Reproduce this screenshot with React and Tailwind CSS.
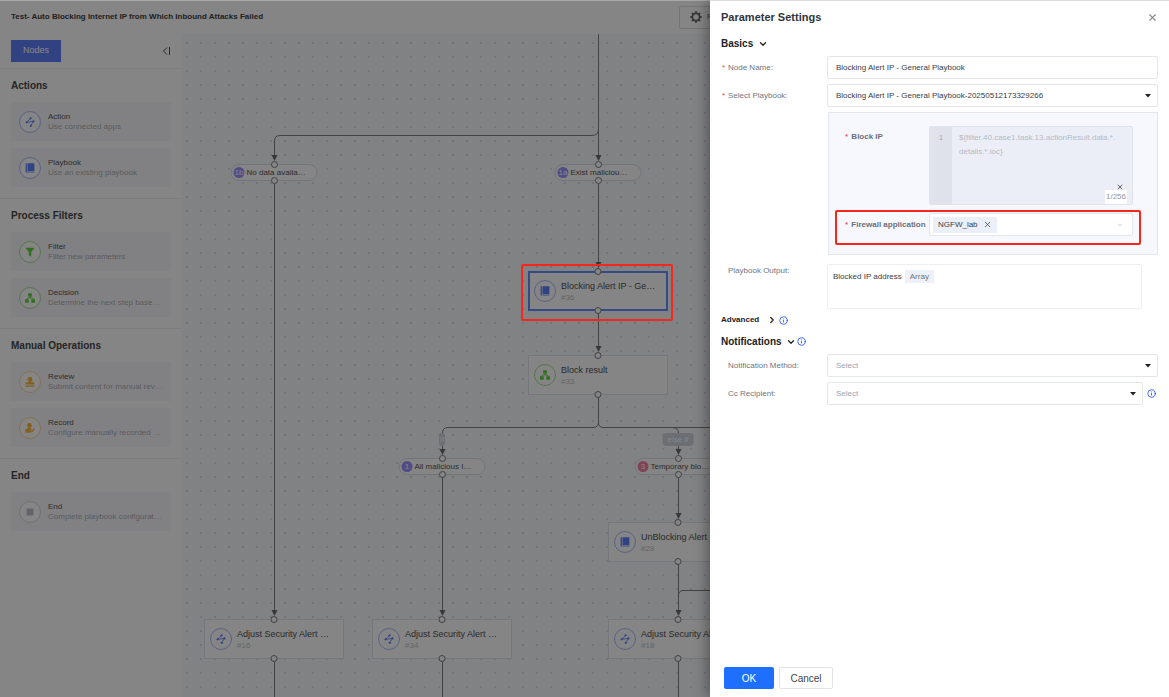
import { useState } from "react";
import { ChevronDown, ChevronRight, Info, X } from "lucide-react";
import clsx from "clsx";

const TONES = {
  blue: "border-[#a9bcff] text-[#5a82ff]",
  green: "border-[#a2e392] text-[#62d443]",
  orange: "border-[#ffd899] text-[#fcb840]",
  gray: "border-[#d5d8e0] text-[#bcc0ca]",
};

const ICONS = {
  action: (
    <>
      <path d="M9 2 3 8.500 13.500 7 9.200 14" fill="none" stroke="currentColor" strokeWidth="1.300" />
      <circle cx="9" cy="2" r="1.800" />
      <circle cx="2.600" cy="8.500" r="1.800" />
      <circle cx="13.500" cy="7" r="1.800" />
      <circle cx="9.200" cy="14" r="1.800" />
    </>
  ),
  playbook: (
    <>
      <path d="M1 .5h2v13H1zM4 .5h11v12.500H4z" />
      <path d="M1.500 12v2.700H15" fill="none" stroke="currentColor" strokeWidth="1" />
    </>
  ),
  filter: <path d="M.5 1h15L10 8v7.500l-4-2.500V8z" />,
  decision: (
    <>
      <path d="M5 .5h6v5.500H5zM0 10h6v5.500H0zM10 10h6v5.500h-6z" />
      <path d="M8 6v2M3 10.500V9l2-1h6l2 1v1.500" fill="none" stroke="currentColor" strokeWidth="1.500" />
    </>
  ),
  review: (
    <>
      <circle cx="8" cy="4" r="3.900" />
      <path d="M6.300 6h3.400v2.500H14a1 1 0 0 1 1 1V12H1V9.500a1 1 0 0 1 1-1h4.300zM.8 13.500h14.400v2H.8z" />
    </>
  ),
  record: (
    <>
      <circle cx="7" cy="4" r="3.900" />
      <path d="M5.200 6.500h3.600v2l2 .8L8.200 15.500H.5v-4a2 2 0 0 1 1.700-1.900l3-1.100z" />
      <path d="m9.500 13 4.300-4.600 1.900 1.800-4.400 4.500-2.200.7z" />
    </>
  ),
  end: <path d="M2.500 2.500h11v11h-11z" />,
};

const SECTIONS = [
  {
    title: "Actions",
    items: [
      { icon: "action", tone: "blue", name: "Action", hint: "Use connected apps" },
      { icon: "playbook", tone: "blue", name: "Playbook", hint: "Use an existing playbook" },
    ],
  },
  {
    title: "Process Filters",
    items: [
      { icon: "filter", tone: "green", name: "Filter", hint: "Filter new parameters" },
      { icon: "decision", tone: "green", name: "Decision", hint: "Determine the next step base…" },
    ],
  },
  {
    title: "Manual Operations",
    items: [
      { icon: "review", tone: "orange", name: "Review", hint: "Submit content for manual rev…" },
      { icon: "record", tone: "orange", name: "Record", hint: "Configure manually recorded …" },
    ],
  },
  {
    title: "End",
    items: [{ icon: "end", tone: "gray", name: "End", hint: "Complete playbook configurat…" }],
  },
];

// Canvas coordinates: x is the centre of the node, y its top edge
const CARDS = [
  { x: 416, y: 237, icon: "playbook", tone: "blue", label: "Blocking Alert IP - Ge…", id: "#36", active: true },
  { x: 416, y: 321, icon: "decision", tone: "green", label: "Block result", id: "#33" },
  { x: 496, y: 488, icon: "playbook", tone: "blue", label: "UnBlocking Alert", id: "#28" },
  { x: 92, y: 585, icon: "action", tone: "blue", label: "Adjust Security Alert …", id: "#16" },
  { x: 260, y: 585, icon: "action", tone: "blue", label: "Adjust Security Alert …", id: "#34" },
  { x: 496, y: 585, icon: "action", tone: "blue", label: "Adjust Security Alert …", id: "#18" },
];

const PILLS = [
  { x: 92, y: 130, badge: "1b", color: "bg-[#9c92ff]", label: "No data availa…" },
  { x: 416, y: 130, badge: "1a", color: "bg-[#9c92ff]", label: "Exist maliciou…" },
  { x: 260, y: 424, badge: "1", color: "bg-[#9c92ff]", label: "All malicious I…" },
  { x: 496, y: 424, badge: "3", color: "bg-[#f682a8]", label: "Temporary blo…" },
];

const EDGES = [
  "M416.5 0V126",
  "M416.5 95Q416.5 101.5 410 101.5H98Q92.5 101.5 92.5 107V126",
  "M92.5 150V581",
  "M416.5 150V233",
  "M416.5 279V317",
  "M416.5 363V388Q416.5 393.5 411 393.5H266Q260.5 393.5 260.5 399V420",
  "M416.5 388Q416.5 393.5 421 393.5H490Q496.5 393.5 496.5 399V420",
  "M490 393.5H600",
  "M260.5 443V581",
  "M496.5 443V484",
  "M496.5 529V581",
  "M600 556.5H501Q496.5 556.5 496.5 562V581",
  "M92.5 627V700",
  "M260.5 627V700",
  "M496.5 627V700",
];

const ARROWS = [
  [92.5, 127], [416.5, 127], [416.5, 234], [416.5, 318], [260.5, 421],
  [496.5, 421], [496.5, 485], [92.5, 582], [260.5, 582], [496.5, 582],
];

const NodeIcon = ({ icon, tone }) => (
  <span
    className={clsx(
      "flex size-[22px] shrink-0 items-center justify-center rounded-full border bg-white",
      TONES[tone]
    )}
  >
    <svg viewBox="0 0 16 16" className="size-[10px]" fill="currentColor">
      {ICONS[icon]}
    </svg>
  </span>
);

const Port = ({ className }) => (
  <span
    className={clsx(
      "absolute left-1/2 size-[7px] -translate-x-1/2 rounded-full border border-[#7d7d7d] bg-white",
      className
    )}
  />
);

const Sidebar = () => (
  <aside className="w-[182px] shrink-0 overflow-hidden bg-white">
    <div className="flex h-[35px] items-center justify-between border-b border-[#edeef2] px-[11px]">
      <button className="h-[22px] bg-[#5f7ffa] px-3 text-[9px] text-white">Nodes</button>
      <button aria-label="Collapse nodes" className="text-[#555]">
        <svg viewBox="0 0 9 10" className="h-[10px] w-[9px]" fill="none" stroke="currentColor">
          <path d="M5 1.500 1.500 5 5 8.500M7.500 1v8" />
        </svg>
      </button>
    </div>
    {SECTIONS.map((section) => (
      <section
        key={section.title}
        className="border-b border-[#edeef2] px-[11px] pt-[11px] pb-[11px] last:border-b-0"
      >
        <h2 className="mb-[10px] text-[10px] leading-3 font-bold text-[#484848]">{section.title}</h2>
        <div className="flex flex-col gap-[7px]">
          {section.items.map((item) => (
            <div key={item.name} className="flex h-[39px] items-center gap-[7px] bg-[#f8f8fc] pl-2">
              <NodeIcon icon={item.icon} tone={item.tone} />
              <div className="min-w-0 text-[8px] leading-[10px] whitespace-nowrap">
                <p className="text-[#555]">{item.name}</p>
                <p className="text-[#aeb0b7]">{item.hint}</p>
              </div>
            </div>
          ))}
        </div>
      </section>
    ))}
  </aside>
);

const Canvas = () => (
  <main className="relative flex-1 overflow-hidden bg-[#f8f9fe] bg-[radial-gradient(circle,#dcdee5_1px,transparent_1px)] bg-size-[14px_14px] bg-position-[-2px_2px]">
    <svg className="absolute inset-0 h-full w-full" fill="none" stroke="#808080">
      {EDGES.map((d) => (
        <path key={d} d={d} />
      ))}
      {ARROWS.map(([x, y]) => (
        <path key={`${x}-${y}`} d={`M${x - 3} ${y - 6}h6l-3 6z`} fill="#6b6b6b" stroke="none" />
      ))}
    </svg>

    {/* Condition labels on the branches */}
    <span className="absolute top-[399px] left-[260px] -translate-x-1/2 rounded-sm bg-[#d0d3de] px-px text-[8px] leading-[13px] text-white">
      if
    </span>
    <span className="absolute top-[399px] left-[496px] -translate-x-1/2 rounded-sm bg-[#d0d3de] px-[5px] text-[8px] leading-[13px] whitespace-nowrap text-white">
      else if
    </span>

    {PILLS.map((pill) => (
      <div
        key={pill.label}
        className="absolute flex h-[17px] w-[87px] -translate-x-1/2 items-center gap-[2px] rounded-full border border-[#dcdeea] bg-white pl-[2px]"
        style={{ left: pill.x, top: pill.y }}
      >
        <span
          className={clsx(
            "flex size-[11px] shrink-0 items-center justify-center rounded-full text-[8px] leading-none text-white",
            pill.color
          )}
        >
          {pill.badge}
        </span>
        <span className="text-[8px] whitespace-nowrap text-[#555]">{pill.label}</span>
        <Port className="-top-1" />
        <Port className="-bottom-1" />
      </div>
    ))}

    {CARDS.map((card) => (
      <div
        key={card.id}
        className={clsx(
          "absolute flex h-10 w-[140px] -translate-x-1/2 items-center gap-[5px] bg-white",
          card.active ? "border-2 border-[#648cff] pl-1" : "border border-[#e1e4ee] pl-[5px]"
        )}
        style={{ left: card.x, top: card.y }}
      >
        <NodeIcon icon={card.icon} tone={card.tone} />
        <div className="whitespace-nowrap">
          <p className="text-[9px] leading-3 text-[#505050]">{card.label}</p>
          <p className="text-[8px] leading-[11px] text-[#c0c2ca]">{card.id}</p>
        </div>
        <Port className={card.active ? "-top-[5px]" : "-top-1"} />
        <Port className={card.active ? "-bottom-[5px]" : "-bottom-1"} />
      </div>
    ))}
  </main>
);

const GearIcon = () => (
  <svg viewBox="0 0 12 12" className="size-3" fill="none" stroke="currentColor">
    <circle cx="6" cy="6" r="3.600" strokeWidth="1.800" />
    <path
      d="M6 .3v1.500M6 10.200v1.500M.3 6h1.500M10.200 6h1.500M2 2l1 1M9 9l1 1M2 10l1-1M9 3l1-1"
      strokeWidth="2"
    />
  </svg>
);

const Caret = () => (
  <svg
    viewBox="0 0 6 4"
    className="pointer-events-none absolute top-1/2 right-[7px] h-1 w-[6px] -translate-y-1/2"
    fill="#222"
  >
    <path d="M0 0h6L3 3.500z" />
  </svg>
);

const SelectBox = ({ id, value, placeholder }) => (
  <div className="relative min-w-0 flex-1">
    <select
      id={id}
      className={clsx(
        "block h-[23px] w-full appearance-none rounded-xs border border-[#e3e6ec] bg-white px-2 text-[8px] outline-none",
        placeholder ? "text-[#9ba3b3]" : "text-[#3a3d44]"
      )}
    >
      <option>{value || placeholder}</option>
    </select>
    <Caret />
  </div>
);

const Label = ({ htmlFor, required, children }) => (
  <label htmlFor={htmlFor} className="flex w-[106px] shrink-0 text-[8px] leading-[14px] text-[#6f7580]">
    <span className="w-[7px] pl-px text-[#f04040]">{required && "*"}</span>
    {children}
  </label>
);

const InfoIcon = () => <Info className="size-[9px] text-[#2f62ff]" strokeWidth={2.5} />;

const ParameterDrawer = () => {
  const [nodeName, setNodeName] = useState("Blocking Alert IP - General Playbook");
  const [apps, setApps] = useState(["NGFW_lab"]);

  return (
    <div
      role="dialog"
      aria-label="Parameter Settings"
      className="flex w-[459px] flex-col overflow-hidden border-t border-[#dcdcdc] bg-white shadow-[-3px_0_12px_rgba(0,0,0,0.35)]"
    >
      <header className="flex h-[33px] shrink-0 items-center justify-between px-[11px]">
        <h1 className="text-[11px] font-bold text-[#2f343d]">Parameter Settings</h1>
        <button aria-label="Close" className="text-[#8c8c8c]">
          <X className="size-[11px]" strokeWidth={2.5} />
        </button>
      </header>

      <form className="min-h-0 flex-1 px-[11px]" onSubmit={(e) => e.preventDefault()}>
        <button type="button" className="flex h-[19px] items-center gap-[5px] text-[10px] font-bold text-[#222]">
          Basics
          <ChevronDown className="size-[10px]" strokeWidth={3} />
        </button>

        <div className="mt-[3px] flex flex-col gap-[5px]">
          <div className="flex items-center">
            <Label htmlFor="node-name" required>Node Name:</Label>
            <input
              id="node-name"
              value={nodeName}
              onChange={(e) => setNodeName(e.target.value)}
              className="h-[23px] min-w-0 flex-1 rounded-xs border border-[#e3e6ec] px-2 text-[8px] text-[#3a3d44] outline-none"
            />
          </div>
          <div className="flex items-center">
            <Label htmlFor="playbook" required>Select Playbook:</Label>
            <SelectBox id="playbook" value="Blocking Alert IP - General Playbook-20250512173329266" />
          </div>

          {/* Playbook parameters */}
          <div className="ml-[107px] flex flex-col gap-2 border border-[#e3e6ef] bg-[#f7f8fd] pt-[13px] pr-6 pb-[18px] pl-4">
            <div className="flex">
              <label
                htmlFor="block-ip"
                className="w-[84px] shrink-0 pt-1 text-[8px] leading-[14px] font-bold text-[#6b7079]"
              >
                <span className="mr-px text-[#ea5a6c]">*</span> Block IP
              </label>
              <div className="relative flex h-[79px] min-w-0 flex-1 rounded-xs border border-[#dfe3ec] bg-[#ebeef7]">
                <span className="w-[22px] shrink-0 bg-[#dfe2ea] pt-1 text-center text-[8px] leading-[14px] text-[#a9afbb]">
                  1
                </span>
                <textarea
                  id="block-ip"
                  readOnly
                  value={"${filter.40.case1.task.13.actionResult.data.*.\ndetails.*.ioc}"}
                  className="min-w-0 flex-1 resize-none overflow-hidden pt-1 pl-[7px] text-[8px] leading-[14px] text-[#b4bac6] outline-none"
                />
                <button type="button" aria-label="Clear" className="absolute right-2 bottom-[13px] text-[#444]">
                  <X className="size-[8px]" strokeWidth={2.5} />
                </button>
                <span className="absolute right-[5px] bottom-0 bg-white px-px text-[8px] leading-[14px] text-[#8f949e]">
                  1/256
                </span>
              </div>
            </div>

            <div className="relative flex items-center">
              <label
                htmlFor="firewall"
                className="w-[84px] shrink-0 text-[8px] leading-[14px] font-bold whitespace-nowrap text-[#6b7079]"
              >
                <span className="mr-px text-[#ea5a6c]">*</span> Firewall application
              </label>
              <div className="flex h-[23px] min-w-0 flex-1 items-center rounded-xs border border-[#e3e6ec] bg-white pr-2 pl-[3px]">
                {apps.map((app) => (
                  <span
                    key={app}
                    className="flex h-4 items-center gap-[5px] bg-[#ebeff8] px-[5px] text-[8px] text-[#3a3d44]"
                  >
                    {app}
                    <button
                      type="button"
                      aria-label={`Remove ${app}`}
                      onClick={() => setApps(apps.filter((a) => a !== app))}
                    >
                      <X className="size-[9px]" strokeWidth={2} />
                    </button>
                  </span>
                ))}
                <input id="firewall" role="combobox" aria-expanded="false" className="min-w-0 flex-1 text-[8px] outline-none" />
                <ChevronDown className="size-[8px] text-[#b5b9c2]" />
              </div>
              <div className="pointer-events-none absolute -top-[3px] -right-2 -bottom-[9px] -left-[10px] rounded-xs border-2 border-[#f5271c]" />
            </div>
          </div>
        </div>

        <div className="mt-[9px] flex">
          <Label>Playbook Output:</Label>
          <div className="mr-4 h-[45px] flex-1 rounded-xs border border-[#eceef2] px-[5px] pt-[5px] text-[8px] text-[#3a3d44]">
            <span className="flex items-center gap-[3px]">
              Blocked IP address
              <span className="bg-[#eef1f9] px-[5px] leading-[13px] text-[#6b7079]">Array</span>
            </span>
          </div>
        </div>

        <div className="mt-[2px] flex h-[18px] items-center gap-[2px]">
          <button type="button" className="flex items-center gap-2 text-[8px] font-bold text-[#222]">
            Advanced
            <ChevronRight className="size-[10px]" strokeWidth={3} />
          </button>
          <InfoIcon />
        </div>
        <div className="mt-[3px] flex h-[19px] items-center gap-px">
          <button type="button" className="flex items-center gap-1 text-[10px] font-bold text-[#222]">
            Notifications
            <ChevronDown className="size-[10px]" strokeWidth={3} />
          </button>
          <InfoIcon />
        </div>

        <div className="mt-[3px] flex flex-col gap-[5px]">
          <div className="flex items-center">
            <Label htmlFor="method">Notification Method:</Label>
            <SelectBox id="method" placeholder="Select" />
          </div>
          <div className="flex items-center">
            <Label htmlFor="cc">Cc Recipient:</Label>
            <SelectBox id="cc" placeholder="Select" />
            <span className="pr-[2px] pl-1">
              <InfoIcon />
            </span>
          </div>
        </div>
      </form>

      <footer className="flex shrink-0 gap-[5px] px-[14px] pb-2 text-[10px]">
        <button className="h-[22px] w-[50px] rounded-xs bg-[#1f6fff] text-white">OK</button>
        <button className="h-[22px] w-[54px] rounded-xs border border-[#e3e3e6] bg-white text-[#444]">
          Cancel
        </button>
      </footer>
    </div>
  );
};

export default function App() {
  return (
    <div className="relative h-screen overflow-hidden font-['Liberation_Sans',Arial,sans-serif]">
      <div className="flex h-full flex-col bg-white">
        <header className="flex h-[34px] shrink-0 items-center justify-between pr-[430px] pl-[11px]">
          <h1 className="text-[8px] font-bold text-[#404040]">
            Test- Auto Blocking Internet IP from Which Inbound Attacks Failed
          </h1>
          <button className="flex h-[23px] w-[60px] items-center gap-[5px] rounded-xs border border-[#dcdee4] pl-[10px] text-[8px] text-[#666]">
            <GearIcon />
            P
          </button>
        </header>
        <div className="flex min-h-0 flex-1">
          <Sidebar />
          <Canvas />
        </div>
      </div>

      {/* Backdrop and drawer */}
      <div className="absolute inset-0 flex justify-end border-t border-[#a8a8a8] bg-black/48">
        <div className="absolute top-[263px] left-[521px] h-[57px] w-[152px] rounded-xs border-2 border-[#f5271c]" />
        <div className="relative -mt-px flex">
          <ParameterDrawer />
        </div>
      </div>
    </div>
  );
}
